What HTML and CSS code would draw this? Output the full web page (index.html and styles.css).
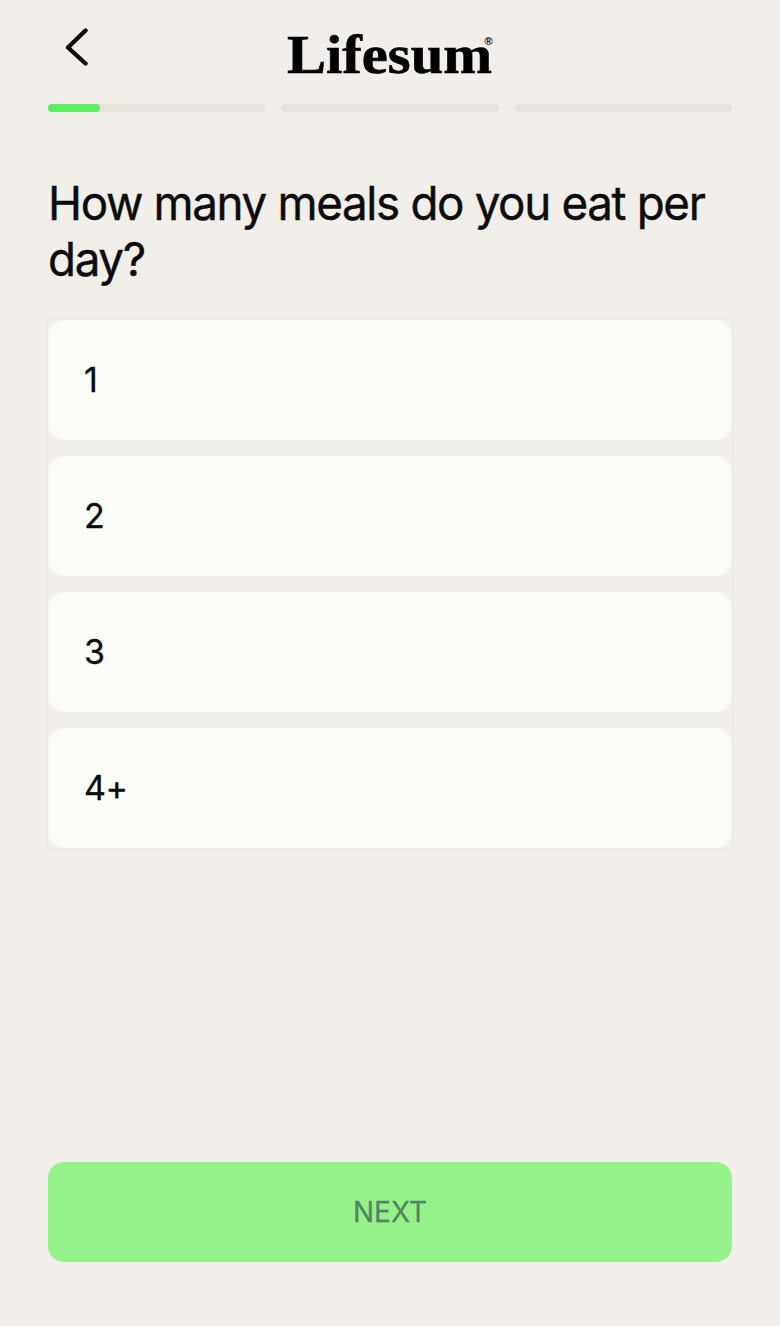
FILE: index.html
```
<!DOCTYPE html>
<html lang="en">
<head>
  <meta charset="UTF-8">
  <meta name="viewport" content="width=device-width, initial-scale=1.0">
  <title>Lifesum</title>
  <link rel="stylesheet" href="styles.css">
</head>
<body>
  <header class="header">
    <button class="back" aria-label="Back">
      <svg width="24" height="40" viewBox="0 0 24 40">
        <path d="M20.5 3.500 L3 20.500 L20.500 36.500" />
      </svg>
    </button>
    <svg class="logo" width="210" height="48" viewBox="0 0 210 48">
      <text class="logo-name" x="2" y="42.500" textLength="205" lengthAdjust="spacingAndGlyphs">Lifesum</text>
      <text class="logo-mark" x="199.500" y="15">®</text>
    </svg>
  </header>

  <div class="progress">
    <div class="step"><div class="step-fill" style="width: 24%"></div></div>
    <div class="step"></div>
    <div class="step"></div>
  </div>

  <main>
    <h1>How many meals do you eat per day?</h1>
    <div class="options">
      <button class="option">1</button>
      <button class="option">2</button>
      <button class="option">3</button>
      <button class="option">4+</button>
    </div>
  </main>

  <button class="next" disabled>NEXT</button>
</body>
</html>
```
FILE: styles.css
```
* {
  box-sizing: border-box;
}

body {
  margin: 0;
  padding: 0 48px 64px;
  min-height: 1326px;
  font-family: Inter, "Liberation Sans", sans-serif;
  background: #f2eee9;
  color: #0c0c0c;
  display: flex;
  flex-direction: column;
}

button {
  font-family: inherit;
  border: none;
  padding: 0;
}

.header {
  height: 104px;
  display: grid;
  grid-template-columns: 1fr 210px 1fr;
  align-items: start;
}

.back {
  justify-self: start;
  margin: 27px 0 0 17px;
  height: 40px;
  background: none;
}

.back svg {
  display: block;
  fill: none;
  stroke: #0c0c0c;
  stroke-width: 4.4;
  stroke-linecap: round;
  stroke-linejoin: round;
}

.logo {
  margin-top: 30px;
  overflow: visible;
}

.logo-name {
  font: bold 54px "Liberation Serif", serif;
  fill: #000;
  stroke: #000;
  stroke-width: 0.6;
}

.logo-mark {
  font: bold 11px "Liberation Sans", sans-serif;
}

.progress {
  display: flex;
  gap: 16px;
}

.step {
  flex: 1;
  height: 8px;
  border-radius: 4px;
  background: #e8e3da;
}

.step-fill {
  height: 8px;
  border-radius: 4px;
  background: #5eee62;
}

h1 {
  margin: 63px 0 33px;
  font-size: 47px;
  line-height: 56px;
  font-weight: 400;
  letter-spacing: -1.4px;
  -webkit-text-stroke: 0.4px #0c0c0c;
  transform: scaleX(0.974);
  transform-origin: left;
}

.options {
  display: flex;
  flex-direction: column;
  gap: 16px;
  box-shadow: 0 0 0 2px #eeeae6;
}

.option {
  height: 120px;
  padding: 0 0 2px 36px;
  border-radius: 16px;
  background: #fcfcf8;
  box-shadow: inset 0 0 3px 2px #f8f8f5;
  color: #0c0c0c;
  font-size: 34px;
  letter-spacing: -0.5px;
  text-align: left;
  -webkit-text-stroke: 0.3px #0c0c0c;
}

.next {
  height: 100px;
  margin-top: auto;
  border-radius: 16px;
  background: #95f28b;
  color: #528563;
  font-size: 28px;
  -webkit-text-stroke: 0.3px #528563;
}
```
